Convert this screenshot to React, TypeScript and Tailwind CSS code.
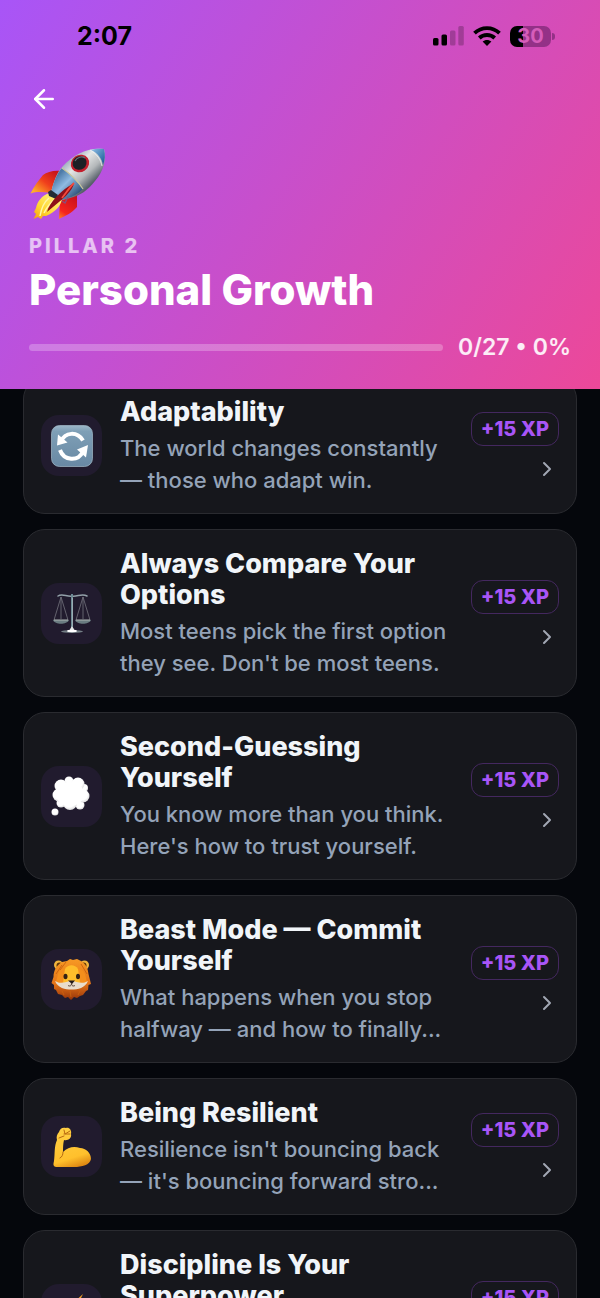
import type { ReactNode } from 'react'
import { ArrowLeft, ChevronRight } from 'lucide-react'

function RocketIcon() {
  return (
    <svg viewBox="0 0 78 76" className="h-[76px] w-[78px]" aria-hidden="true">
      <defs>
        <linearGradient id="hull" x1="36" y1="14" x2="60" y2="40" gradientUnits="userSpaceOnUse">
          <stop offset="0" stopColor="#8fa3b5" />
          <stop offset="0.35" stopColor="#e4e6e6" />
          <stop offset="0.7" stopColor="#b4b8ba" />
          <stop offset="1" stopColor="#565f69" />
        </linearGradient>
        <linearGradient id="skirt" x1="28" y1="30" x2="48" y2="50" gradientUnits="userSpaceOnUse">
          <stop offset="0" stopColor="#4d7ba8" />
          <stop offset="0.4" stopColor="#8fbbe2" />
          <stop offset="1" stopColor="#2b5078" />
        </linearGradient>
        <linearGradient id="nose" x1="62" y1="3" x2="76" y2="14" gradientUnits="userSpaceOnUse">
          <stop offset="0" stopColor="#8fbfe6" />
          <stop offset="1" stopColor="#23659f" />
        </linearGradient>
        <linearGradient id="fin" x1="26" y1="26" x2="8" y2="48" gradientUnits="userSpaceOnUse">
          <stop offset="0" stopColor="#c9151b" />
          <stop offset="0.5" stopColor="#f0401c" />
          <stop offset="1" stopColor="#ffb02a" />
        </linearGradient>
        <linearGradient id="finLow" x1="46" y1="50" x2="30" y2="73" gradientUnits="userSpaceOnUse">
          <stop offset="0" stopColor="#c8101c" />
          <stop offset="0.7" stopColor="#f6251c" />
          <stop offset="1" stopColor="#ff8a1f" />
        </linearGradient>
        <linearGradient id="flame" x1="24" y1="48" x2="5" y2="73" gradientUnits="userSpaceOnUse">
          <stop offset="0" stopColor="#fff27a" />
          <stop offset="0.6" stopColor="#ffd52d" />
          <stop offset="1" stopColor="#f59a12" />
        </linearGradient>
      </defs>
      <path d="M32 25C25 24 18 26 14 29C10 34 5 40 1.500 47.500C8 45 15 46 22 47L28 38Z" fill="url(#fin)" />
      <path d="M48 47L48 61C43 67 36 70 30 73L31 55L38 48Z" fill="url(#finLow)" />
      <path d="M21 47C12 49 8 57 7 62L5 66L7 68L4.500 73L9 71L12 73L14 70L17 70C26 66 32 60 33 53Z" fill="url(#flame)" />
      <path d="M20 52C14 57 12 64 11 70M25 54C20 58 17 63 15 67" fill="none" stroke="#fff7a5" strokeWidth="1.500" />
      <path d="M22 47C24 37 28 26 34 20C45 8 59 1 75 3C78 14 74 26 66 35C59 44 51 50 41 52C35 54 30 55 27 52Z" fill="url(#hull)" />
      <path d="M22 47C24 37 28 27 33 22C38 25 49 36 54 43C49 48 43 51 39 52C34 54 30 55 27 52Z" fill="url(#skirt)" />
      <path d="M62 4C66 2.500 71 2.400 75 3C76.500 9 76 14 74 19C73 13 69 7 62 4Z" fill="url(#nose)" />
      <path d="M33 22C40 27 49 35 54 43" fill="none" stroke="#c9c79c" strokeWidth="1.200" />
      <path d="M61 4C68 8 72 14 73 20" fill="none" stroke="#eff6fa" strokeWidth="0.800" />
      <ellipse cx="51" cy="17.500" rx="9.500" ry="8.500" transform="rotate(-35 51 17.500)" fill="#c31f2d" />
      <ellipse cx="50.600" cy="17" rx="7.200" ry="6.600" transform="rotate(-35 50.600 17)" fill="#1d2025" />
      <path d="M46 15C48 11 53 10 56 12" fill="none" stroke="#687078" strokeWidth="1.200" />
      <path d="M19 46L22 44L29 49L27 53L20 50Z" fill="#222c35" />
      <path d="M18 66C20 57 32 44 45 37C44 45 34 53 18 66Z" fill="#8e1018" />
      <path d="M33 52C37 47 40 42 45 37" fill="none" stroke="#f34b3d" strokeWidth="1.800" />
      <path d="M33 55L36 57L39 51" fill="none" stroke="#8c4d78" strokeWidth="1.500" />
    </svg>
  )
}

function RefreshTile() {
  return (
    <svg viewBox="0 0 44 44" className="size-11" aria-hidden="true">
      <defs>
        <linearGradient id="key" x1="0" y1="1" x2="0" y2="43" gradientUnits="userSpaceOnUse">
          <stop offset="0" stopColor="#9fb9ca" />
          <stop offset="0.15" stopColor="#7e9fb6" />
          <stop offset="1" stopColor="#6888a3" />
        </linearGradient>
      </defs>
      <rect x="1.500" y="1.500" width="41" height="41" rx="8" fill="url(#key)" stroke="#a2bac9" strokeWidth="0.700" />
      <path d="M11 17.500C15 8 27 7 33 16.500" fill="none" stroke="#fff" strokeWidth="4" />
      <path d="M8 10.500L7 21.500L17.500 18.500Z" fill="#fff" />
      <path d="M10 26C14 37 28 38 33 27.500" fill="none" stroke="#fff" strokeWidth="4" />
      <path d="M38 21L27 25.500L36 33.500Z" fill="#fff" />
    </svg>
  )
}

function ScalesIcon() {
  return (
    <svg viewBox="0 0 44 44" className="size-11" fill="none" aria-hidden="true">
      <path d="M8 5C12 2 17 6 22 5C27 6 32 2 37 5" stroke="#93a1a9" strokeWidth="1.500" strokeLinecap="round" />
      <path d="M11 6L4 29M11 6L18 29M11 6V28M33 6L26 29M33 6L40 29M33 6V28" stroke="#74747d" strokeWidth="0.800" />
      <path d="M22 3V39" stroke="#6d8b95" strokeWidth="2" />
      <path d="M22.500 7V35" stroke="#b9c4c8" strokeWidth="0.600" />
      <path d="M3 29H19C17 34 5 34 3 29ZM25 29H41C39 34 27 34 25 29Z" fill="#6a7c81" />
      <path d="M4 29H18M26 29H40" stroke="#adb6b4" strokeWidth="1.200" />
      <ellipse cx="22" cy="40.500" rx="11" ry="1.500" fill="#747f86" />
      <path d="M19.500 39L22 35L24.500 39Z" fill="#e2e6e6" />
      <ellipse cx="22" cy="40" rx="5" ry="1.200" fill="#fff" />
    </svg>
  )
}

function ThoughtIcon() {
  return (
    <svg viewBox="0 0 44 44" className="size-11" aria-hidden="true">
      <defs>
        <radialGradient id="puff" cx="0.45" cy="0.4" r="0.65">
          <stop offset="0.6" stopColor="#fff" />
          <stop offset="1" stopColor="#d4d4d5" />
        </radialGradient>
      </defs>
      <g fill="url(#puff)">
        <circle cx="34" cy="14" r="4" />
        <circle cx="19" cy="7" r="4.500" />
        <circle cx="11" cy="29" r="4.500" />
        <circle cx="30" cy="31" r="4.500" />
        <circle cx="11" cy="12" r="6.500" />
        <circle cx="28" cy="10" r="6.500" />
        <circle cx="9" cy="21" r="6.500" />
        <circle cx="33" cy="22" r="6.500" />
        <circle cx="20" cy="29" r="7" />
        <circle cx="5" cy="38" r="3.500" />
      </g>
      <ellipse cx="20" cy="20" rx="14" ry="12" fill="#fff" />
    </svg>
  )
}

function LionIcon() {
  return (
    <svg viewBox="0 0 44 44" className="size-11" aria-hidden="true">
      <defs>
        <linearGradient id="mane" x1="0" y1="2" x2="0" y2="43" gradientUnits="userSpaceOnUse">
          <stop offset="0" stopColor="#f79a24" />
          <stop offset="0.6" stopColor="#e47418" />
          <stop offset="1" stopColor="#963409" />
        </linearGradient>
      </defs>
      <circle cx="8.500" cy="8" r="4.500" fill="#f0b43c" />
      <circle cx="34.500" cy="8" r="4.500" fill="#f0b43c" />
      <circle cx="9.500" cy="8.500" r="3" fill="#5d3609" />
      <circle cx="33.500" cy="8.500" r="3" fill="#5d3609" />
      <path d="M17 4L20 2L23 3L27 2L31 4C36 7 38 12 38.500 17L40 23L41 27L38.500 28L38 33L36 34L33 38L30 39L27 41L24 40L21 43L18 40L15 41L12 38L8 37L6 33L4 32L4 28L1.500 26L3.500 20C3.500 13 7 8 12 5Z" fill="url(#mane)" />
      <path d="M8 17C10 8 32 8 35 17L37 25C33 34 10 34 6 25Z" fill="#f58f1c" />
      <path d="M15 12C18 7 25 7 28 12L30 26L21 29L13 26Z" fill="#ffbd2b" />
      <path d="M5 24C12 28 16 24 21.500 24C27 24 31 28 38 24C35 31 28 32.500 21.500 32.500C15 32.500 8 31 5 24Z" fill="#e9ddcb" />
      <ellipse cx="15.500" cy="19.500" rx="2" ry="2.800" fill="#352113" />
      <ellipse cx="28" cy="19.500" rx="2" ry="2.800" fill="#352113" />
      <path d="M18 23.500H25L22 27Z" fill="#231b19" />
      <path d="M18 28.500C20 29.500 21.500 29 21.500 26C21.500 29 23 29.500 25 28.500" fill="none" stroke="#534035" strokeWidth="1" />
      <path d="M12 8L6 17M16 5L10 13M31 7L37 17M12 34L14 38M20 34L21 40M30 34L28 38" fill="none" stroke="#c9610f" strokeWidth="0.900" />
    </svg>
  )
}

function BicepsIcon() {
  return (
    <svg viewBox="0 0 44 44" className="size-11" aria-hidden="true">
      <defs>
        <linearGradient id="arm" x1="12" y1="3" x2="25" y2="43" gradientUnits="userSpaceOnUse">
          <stop offset="0" stopColor="#ffd044" />
          <stop offset="0.75" stopColor="#ffc02c" />
          <stop offset="1" stopColor="#dd8612" />
        </linearGradient>
      </defs>
      <path d="M9 7C10 3 13 2 16 3C19 2 22 5 21 9C22 13 18 16 14 15C13 19 13 23 13 27C18 22 24 21 30 23C36 23 41 28 41 34C40 40 32 42 24 42H8C3 42 3 40 4 36C5 30 4 21 7 15C6 12 7 9 9 7Z" fill="url(#arm)" />
      <path d="M14 5L15 9L20 6M14 9L20 9M9 13L14 11M13 27C13 30 12 32 10 33" fill="none" stroke="#b86a11" strokeWidth="1" strokeLinecap="round" />
    </svg>
  )
}

function BoltIcon() {
  return (
    <svg viewBox="0 0 44 44" className="size-11" aria-hidden="true">
      <path d="M33 2L9 24H20L12 42L37 18H25Z" fill="#f9a322" />
    </svg>
  )
}

type Lesson = { title: string; text: string; icon: ReactNode }

const lessons: Lesson[] = [
  { title: 'Adaptability', text: 'The world changes constantly — those who adapt win.', icon: <RefreshTile /> },
  { title: 'Always Compare Your Options', text: "Most teens pick the first option they see. Don't be most teens.", icon: <ScalesIcon /> },
  { title: 'Second-Guessing Yourself', text: "You know more than you think. Here's how to trust yourself.", icon: <ThoughtIcon /> },
  { title: 'Beast Mode — Commit Yourself', text: 'What happens when you stop halfway — and how to finally...', icon: <LionIcon /> },
  { title: 'Being Resilient', text: "Resilience isn't bouncing back — it's bouncing forward stro...", icon: <BicepsIcon /> },
  { title: 'Discipline Is Your Superpower', text: '', icon: <BoltIcon /> },
]

function LessonCard({ title, text, icon }: Lesson) {
  return (
    <li>
      <a
        href="#lesson"
        className="flex items-center gap-[18px] rounded-[22px] border border-[#2a2b30] bg-[#16171c] px-[17px]"
      >
        <span className="flex size-[61px] shrink-0 items-center justify-center rounded-[18px] bg-[#211b2e]">{icon}</span>
        <span className="flex min-w-0 flex-1 flex-col gap-[5px] pt-[18px] pb-[17px]">
          <span className="text-[27px] leading-[31px] font-extrabold text-[#f1f5f9]">{title}</span>
          <span className="min-h-16 text-[22px] leading-8 font-medium text-[#94a3b8]">{text}</span>
        </span>
        <span className="flex shrink-0 flex-col items-end gap-[11px] pt-0.5">
          <span className="flex h-[34px] items-center rounded-xl border border-[#44285f] px-[9px] text-[20px] font-extrabold text-[#a855f7]">
            +15 XP
          </span>
          <ChevronRight className="size-6 text-[#a1a7b3]" strokeWidth={2} />
        </span>
      </a>
    </li>
  )
}

function StatusBar() {
  return (
    <div className="flex h-[72px] items-center justify-between pr-[45px] pl-[77px] text-black">
      <span className="pt-0.5 text-[25px] font-bold">2:07</span>
      <div className="flex items-center gap-[9px]">
        <svg viewBox="0 0 31 20" className="h-5 w-[31px]" aria-hidden="true">
          <rect x="0" y="12" width="5.500" height="7.500" rx="1.500" />
          <rect x="8.500" y="8.500" width="5.500" height="11" rx="1.500" />
          <rect x="17" y="4.500" width="5.500" height="15" rx="1.500" opacity="0.22" />
          <rect x="25.300" y="0" width="5.500" height="19.500" rx="1.500" opacity="0.22" />
        </svg>
        <svg viewBox="0 0 28 20" className="h-5 w-7" fill="none" stroke="currentColor" strokeWidth="3.800" aria-hidden="true">
          <path d="M1.500 7.200C8.500 0.400 19.500 0.400 26.500 7.200" />
          <path d="M6.300 12C10.500 8 17.500 8 21.700 12" />
          <path d="M14 20L9.600 15.600C12 13.300 16 13.300 18.400 15.600Z" fill="currentColor" stroke="none" />
        </svg>
        <div className="flex items-center gap-px">
          <div className="flex h-[21px] w-[41px] items-center justify-center rounded-[7px] bg-[linear-gradient(90deg,#000_32%,#943187_32%)] text-[20px] leading-5 font-bold text-[#d65dba]">
            30
          </div>
          <span className="h-[7px] w-[3px] rounded-r-full bg-[#943187]" />
        </div>
      </div>
    </div>
  )
}

export default function App() {
  return (
    <div className="flex h-screen flex-col overflow-hidden bg-[#05070c] font-['Inter',sans-serif]">
      <header className="relative z-10 shrink-0 bg-[linear-gradient(123deg,#a855f7,#ec4899)] pb-7">
        <StatusBar />
        <div className="px-[29px]">
          <button type="button" aria-label="Back" className="block py-3 text-white">
            <ArrowLeft className="size-[30px]" strokeWidth={2} />
          </button>
          <div className="mt-5">
            <RocketIcon />
          </div>
          <p className="mt-3 text-[20px] leading-6 font-extrabold tracking-[3px] text-white/65">PILLAR 2</p>
          <h1 className="mt-2 text-[42px] leading-[48px] font-extrabold text-white">Personal Growth</h1>
          <div className="mt-[19px] flex items-center gap-[15px]">
            <div role="progressbar" aria-valuenow={0} aria-label="Lessons completed" className="h-[7px] flex-1 rounded-full bg-white/25" />
            <span className="text-[23px] leading-7 font-semibold text-white/90">0/27 • 0%</span>
          </div>
        </div>
      </header>
      <main className="min-h-0 flex-1 overflow-hidden px-[23px]">
        <ul className="-mt-3 flex flex-col gap-[15px]">
          {lessons.map((lesson) => (
            <LessonCard key={lesson.title} {...lesson} />
          ))}
        </ul>
      </main>
    </div>
  )
}
